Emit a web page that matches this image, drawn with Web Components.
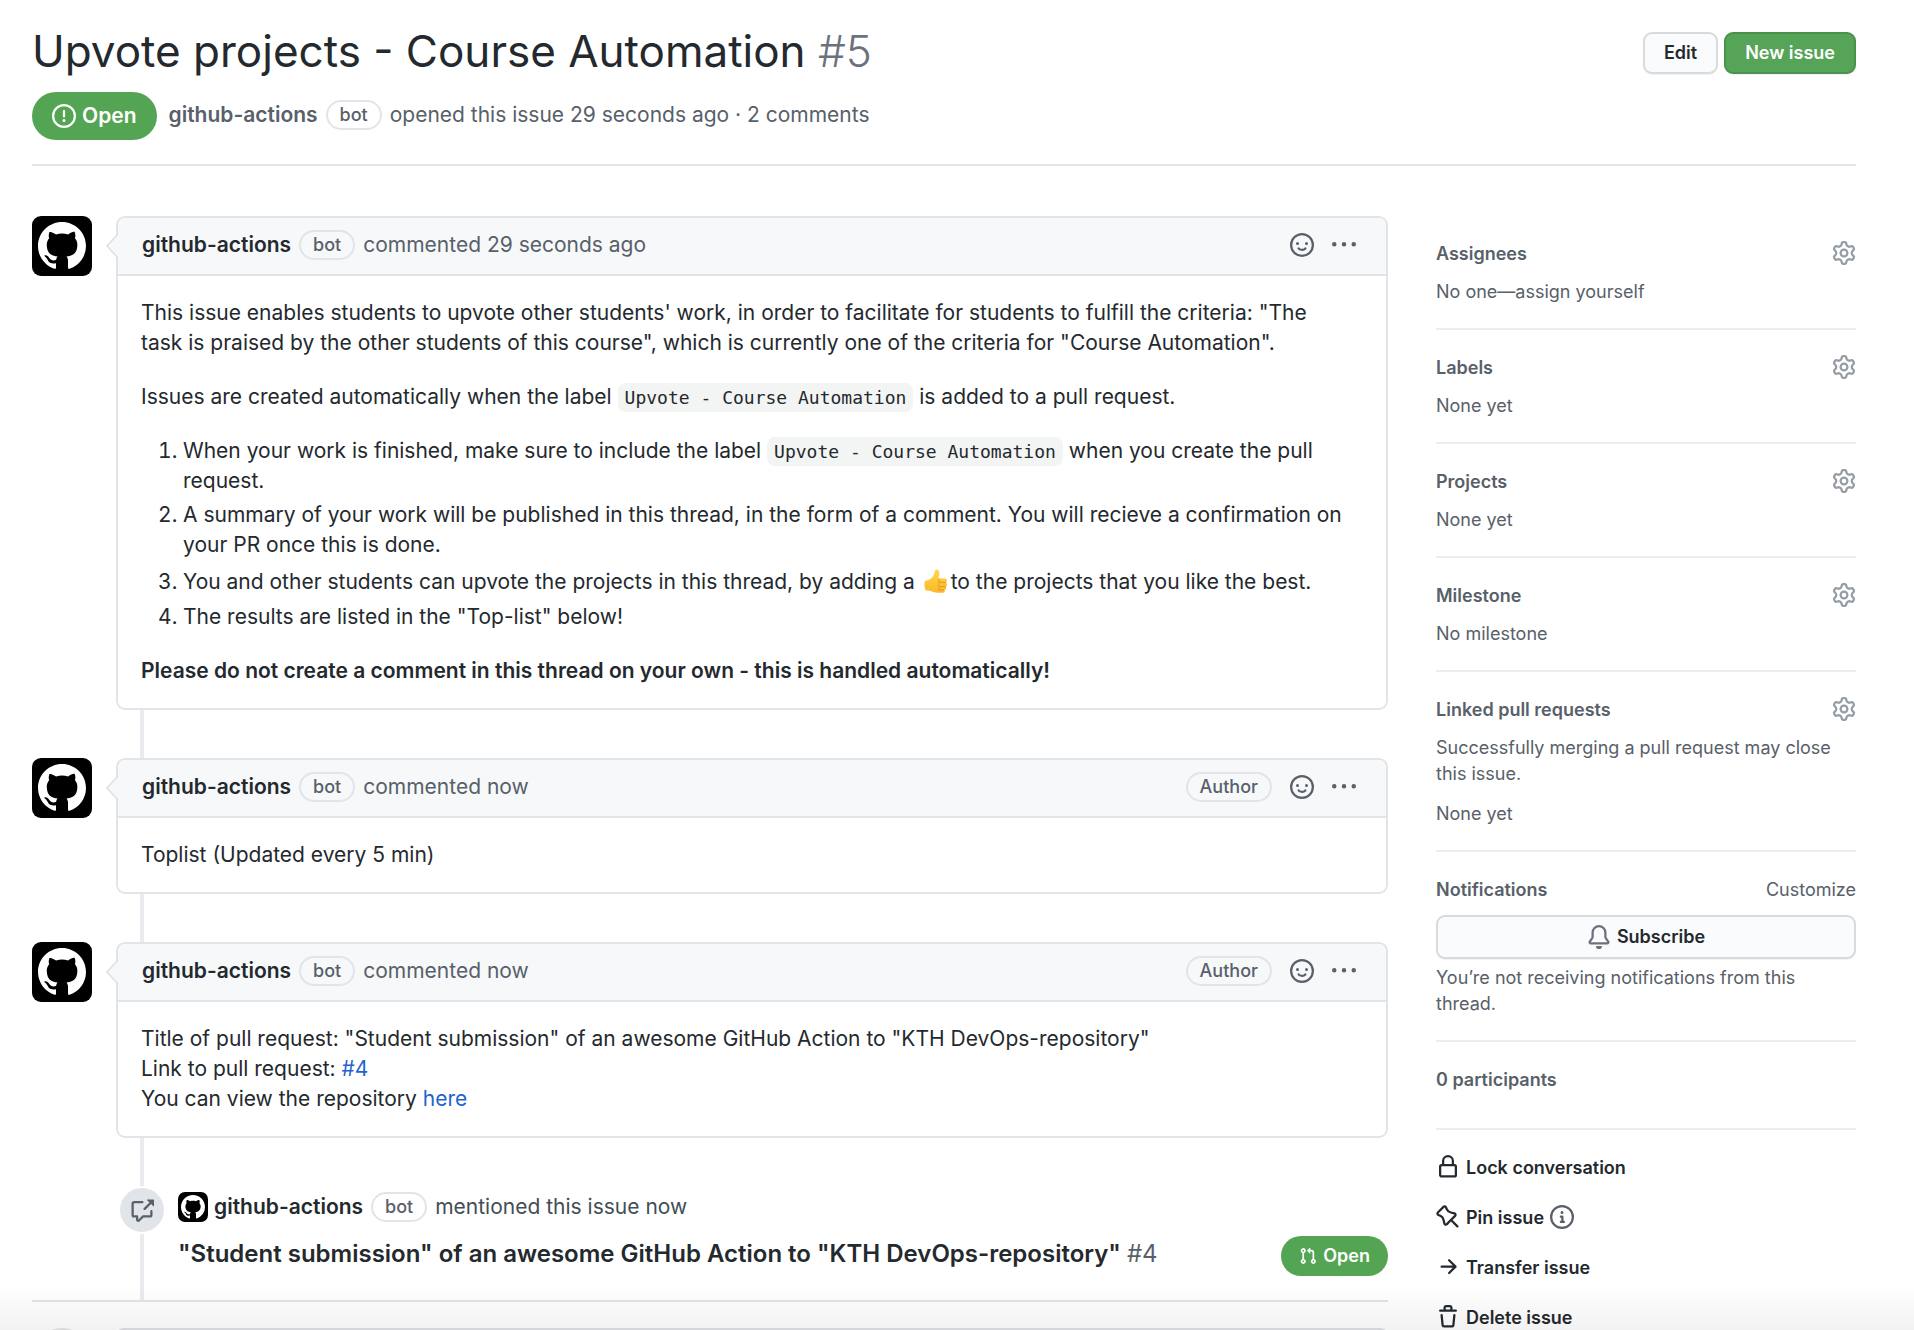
<!DOCTYPE html>
<html lang="en">
<head>
<meta charset="utf-8">
<title>Upvote projects - Course Automation · Issue #5</title>
<style>
  html, body { margin: 0; height: 100%; }
  body { background: #fff; overflow: hidden; }
</style>
</head>
<body>
<issue-page></issue-page>

<template id="t-issue-page">
  <style>
    :host {
      display: block; position: relative; height: 100%; overflow: hidden; box-sizing: border-box;
      padding: 24px 58px 0 32px;
      font: 21px/30px Inter, "Noto Sans", sans-serif; color: #24292e;
    }
    a { color: #1f63d1; text-decoration: none; }
    .top { display: flex; justify-content: space-between; align-items: flex-start; gap: 24px; }
    h1 { margin: 0; font-size: 44px; line-height: 54px; font-weight: 400; }
    h1 span { color: #6a737d; font-weight: 300; }
    .actions { display: flex; gap: 6px; padding-top: 8px; }
    .meta { display: flex; align-items: center; gap: 12px; margin-top: 14px; padding-bottom: 24px; border-bottom: 2px solid #e1e4e8; color: #586069; }
    .line { display: flex; align-items: center; gap: 8px; padding-bottom: 2px; }
    .line a { color: inherit; }
    .author { font-weight: 600; }
    .cols { display: flex; gap: 48px; margin-top: 50px; }
    main { flex: 1; min-width: 0; }
    aside { width: 420px; flex: none; }
    .timeline {
      display: flex; flex-direction: column; gap: 48px;
      background: linear-gradient(#eaebef, #eaebef) 108px 0 / 4px 100% no-repeat;
      border-bottom: 2px solid #e1e4e8;
    }
    p, ol { margin: 0 0 24px; }
    p:last-child { margin-bottom: 0; }
    p.note { margin-bottom: 14px; }
    ol { padding-left: 42px; }
    li + li { margin-top: 4px; }
    strong { font-weight: 600; }
    code { font: 18px/28px "DejaVu Sans Mono", monospace; background: #f3f4f4; border-radius: 8px; padding: 4px 7px; }
    .emoji { width: 24px; height: 24px; margin: 5px 3px; vertical-align: -9px; }
    .form { display: flex; gap: 24px; margin-top: 26px; }
    .form .face { width: 60px; height: 60px; border-radius: 50%; background: #e4e4e6; }
    .form .box { flex: 1; height: 60px; border-radius: 8px; background: #dfe0e6; }
    .fade { position: absolute; left: 0; right: 0; bottom: 0; height: 46px; background: linear-gradient(rgba(0,0,0,0), rgba(0,0,0,.05)); pointer-events: none; }
    .customize { color: inherit; }
    ul { list-style: none; margin: 0; padding: 25px 0 0; display: flex; flex-direction: column; gap: 24px; font-size: 18px; line-height: 26px; }
    ul li { margin: 0; }
  </style>
  <header>
    <div class="top">
      <h1>Upvote projects - Course Automation <span>#5</span></h1>
      <div class="actions"><ui-button>Edit</ui-button><ui-button kind="primary">New issue</ui-button></div>
    </div>
    <div class="meta">
      <state-badge icon="issue">Open</state-badge>
      <div class="line"><a class="author" href="#">github-actions</a><ui-pill>bot</ui-pill><span>opened this issue 29 seconds ago · 2 comments</span></div>
    </div>
  </header>
  <div class="cols">
    <main>
      <div class="timeline">
        <issue-comment when="29 seconds ago">
          <p>This issue enables students to upvote other students' work, in order to facilitate for students to fulfill the criteria: "The task is praised by the other students of this course", which is currently one of the criteria for "Course Automation".</p>
          <p>Issues are created automatically when the label <code>Upvote - Course Automation</code> is added to a pull request.</p>
          <ol>
            <li>When your work is finished, make sure to include the label <code>Upvote - Course Automation</code> when you create the pull request.</li>
            <li>A summary of your work will be published in this thread, in the form of a comment. You will recieve a confirmation on your PR once this is done.</li>
            <li>You and other students can upvote the projects in this thread, by adding a <svg class="emoji" viewBox="0 0 24 24" role="img" aria-label="thumbs up"><defs><linearGradient id="skin" x1="0" y1="0" x2="0" y2="1"><stop offset="0" stop-color="#ffd84a"/><stop offset="1" stop-color="#fbb829"/></linearGradient></defs><path d="M1 11.800C3.400 11.600 6 10.600 7.800 8.800c1.700-1.700 2.600-3.600 2.900-6C10.900 1 11.800.300 13 .600c1.800.400 2.500 2.100 2.300 4.400-.1 1.500-.5 3-1 4.600h6.600c1.200 0 2 .8 2 1.900 0 .9-.5 1.600-1.200 1.900.9.300 1.600 1.100 1.500 2.100-.1 1.100-.8 1.800-1.700 2 .6.400 1 1.100.8 2-.2.900-1 1.500-1.900 1.600.3.400.4.900.3 1.400-.3.900-1.100 1.200-2.200 1.200h-4.900c-2.600 0-4.500-.5-6.100-1.400-1.400-.7-3-.8-5.300-.6C.300 19.500 0 15 1 11.800z" fill="url(#skin)"/><path d="M16 13.400h5.600M15.600 17.500h5.600M15.400 21h4.200M15.800 9.800c-1.300.5-1.700 2.100-.7 3.400M15.200 13.700c-1 .8-1.100 2.700 0 3.600M15 17.800c-.8.900-.7 2.400.2 3" fill="none" stroke="#e08e1c" stroke-width=".8" stroke-linecap="round"/></svg>to the projects that you like the best.</li>
            <li>The results are listed in the "Top-list" below!</li>
          </ol>
          <p><strong>Please do not create a comment in this thread on your own - this is handled automatically!</strong></p>
        </issue-comment>
        <issue-comment when="now" role-label="Author">
          <p>Toplist (Updated every 5 min)</p>
        </issue-comment>
        <issue-comment when="now" role-label="Author">
          <p>Title of pull request: "Student submission" of an awesome GitHub Action to "KTH DevOps-repository"<br>Link to pull request: <a href="#">#4</a><br>You can view the repository <a href="#">here</a></p>
        </issue-comment>
        <cross-reference number="#4">"Student submission" of an awesome GitHub Action to "KTH DevOps-repository"</cross-reference>
      </div>
      <div class="form"><div class="face"></div><div class="box"></div></div>
    </main>
    <aside>
      <side-section heading="Assignees" gear>No one—assign yourself</side-section>
      <side-section heading="Labels" gear>None yet</side-section>
      <side-section heading="Projects" gear>None yet</side-section>
      <side-section heading="Milestone" gear>No milestone</side-section>
      <side-section heading="Linked pull requests" gear><p class="note">Successfully merging a pull request may close this issue.</p>None yet</side-section>
      <side-section heading="Notifications">
        <a class="customize" slot="aside" href="#">Customize</a>
        <ui-button block icon="bell">Subscribe</ui-button>
        You’re not receiving notifications from this thread.
      </side-section>
      <side-section heading="0 participants" empty></side-section>
      <ul>
        <li><side-action icon="lock">Lock conversation</side-action></li>
        <li><side-action icon="pin" info>Pin issue</side-action></li>
        <li><side-action icon="arrow">Transfer issue</side-action></li>
        <li><side-action icon="trash">Delete issue</side-action></li>
      </ul>
    </aside>
  </div>
  <div class="fade"></div>
</template>

<script>
const ICONS = {
  mark: "M8 0C3.58 0 0 3.58 0 8c0 3.54 2.29 6.53 5.47 7.59.4.07.55-.17.55-.38 0-.19-.01-.82-.01-1.49-2.01.37-2.53-.49-2.69-.94-.09-.23-.48-.94-.82-1.13-.28-.15-.68-.52-.01-.53.63-.01 1.08.58 1.23.82.72 1.21 1.87.87 2.33.66.07-.52.28-.87.51-1.07-1.78-.2-3.64-.89-3.64-3.95 0-.87.31-1.59.82-2.15-.08-.2-.36-1.02.08-2.12 0 0 .67-.21 2.2.82.64-.18 1.32-.27 2-.27.68 0 1.36.09 2 .27 1.53-1.04 2.2-.82 2.2-.82.44 1.1.16 1.92.08 2.12.51.56.82 1.27.82 2.15 0 3.07-1.87 3.75-3.65 3.95.29.25.54.73.54 1.48 0 1.07-.01 1.93-.01 2.2 0 .21.15.46.55.38A8.013 8.013 0 0016 8c0-4.42-3.58-8-8-8z",
  gear: "M7.429 1.525a6.593 6.593 0 011.142 0c.036.003.108.036.137.146l.289 1.105c.147.56.55.967.997 1.189.174.086.341.183.501.29.417.278.97.423 1.53.27l1.102-.303c.11-.03.175.016.195.046.219.31.41.641.573.989.014.031.022.11-.059.19l-.815.806c-.411.406-.562.957-.53 1.456a4.588 4.588 0 010 .582c-.032.499.119 1.05.53 1.456l.815.806c.08.08.073.159.059.19a6.494 6.494 0 01-.573.99c-.02.029-.086.074-.195.045l-1.103-.303c-.559-.153-1.112-.008-1.529.27-.16.107-.327.204-.5.29-.449.222-.851.628-.998 1.189l-.289 1.105c-.029.11-.101.143-.137.146a6.613 6.613 0 01-1.142 0c-.036-.003-.108-.037-.137-.146l-.289-1.105c-.147-.56-.55-.967-.997-1.189a4.502 4.502 0 01-.501-.29c-.417-.278-.97-.423-1.53-.27l-1.102.303c-.11.03-.175-.016-.195-.046a6.492 6.492 0 01-.573-.989c-.014-.031-.022-.11.059-.19l.815-.806c.411-.406.562-.957.53-1.456a4.587 4.587 0 010-.582c.032-.499-.119-1.05-.53-1.456l-.815-.806c-.08-.08-.073-.159-.059-.19a6.44 6.44 0 01.573-.99c.02-.029.086-.075.195-.045l1.103.303c.559.153 1.112.008 1.529-.27.16-.107.327-.204.5-.29.449-.222.851-.628.998-1.189l.289-1.105c.029-.11.101-.143.137-.146zM8 0c-.236 0-.47.01-.701.03-.743.065-1.29.615-1.458 1.261l-.29 1.106c-.017.066-.078.158-.211.224a5.994 5.994 0 00-.668.386c-.123.082-.233.09-.3.071L3.27 2.776c-.644-.177-1.392.02-1.82.63a7.977 7.977 0 00-.704 1.217c-.315.675-.111 1.422.363 1.891l.815.806c.05.048.098.147.088.294a6.084 6.084 0 000 .772c.01.147-.038.246-.088.294l-.815.806c-.474.469-.678 1.216-.363 1.891.2.428.436.835.704 1.218.428.609 1.176.806 1.82.63l1.103-.303c.066-.019.176-.011.299.071.213.143.436.272.668.386.133.066.194.158.212.224l.289 1.106c.169.646.715 1.196 1.458 1.26a8.094 8.094 0 001.402 0c.743-.064 1.29-.614 1.458-1.26l.29-1.106c.017-.066.078-.158.211-.224a5.98 5.98 0 00.668-.386c.123-.082.233-.09.3-.071l1.102.302c.644.177 1.392-.02 1.82-.63.268-.382.505-.789.704-1.217.315-.675.111-1.422-.364-1.891l-.814-.806c-.05-.048-.098-.147-.088-.294a6.1 6.1 0 000-.772c-.01-.147.039-.246.088-.294l.814-.806c.475-.469.679-1.216.364-1.891a7.992 7.992 0 00-.704-1.218c-.428-.609-1.176-.806-1.82-.63l-1.103.303c-.066.019-.176.011-.299-.071a5.991 5.991 0 00-.668-.386c-.133-.066-.194-.158-.212-.224L10.16 1.29C9.99.645 9.444.095 8.701.031A8.094 8.094 0 008 0zm1.5 8a1.5 1.5 0 11-3 0 1.5 1.5 0 013 0zM11 8a3 3 0 11-6 0 3 3 0 016 0z",
  issue: "M8 1.5a6.5 6.5 0 100 13 6.5 6.5 0 000-13zM0 8a8 8 0 1116 0A8 8 0 010 8zm9 3a1 1 0 11-2 0 1 1 0 012 0zm-.25-6.25a.75.75 0 00-1.5 0v3.5a.75.75 0 001.5 0v-3.5z",
  smiley: "M1.5 8a6.5 6.5 0 1113 0 6.5 6.5 0 01-13 0zM8 0a8 8 0 100 16A8 8 0 008 0zM5 8a1 1 0 100-2 1 1 0 000 2zm7-1a1 1 0 11-2 0 1 1 0 012 0zM5.32 9.636a.75.75 0 011.038.175l.007.009c.103.118.22.222.35.31.264.178.683.37 1.285.37.602 0 1.02-.192 1.285-.371.13-.088.247-.192.35-.31l.007-.008a.75.75 0 111.222.87l-.614-.431c.614.43.614.431.613.431v.001l-.001.002-.002.003-.005.007-.014.019a1.984 1.984 0 01-.184.213c-.16.166-.338.316-.53.445-.63.418-1.37.638-2.127.629-.946 0-1.652-.308-2.126-.63a3.32 3.32 0 01-.715-.657l-.014-.02-.005-.006-.002-.003v-.002h-.001l.613-.432-.614.43a.75.75 0 01.183-1.044h.001z",
  kebab: "M8 9a1.500 1.500 0 100-3 1.500 1.500 0 000 3zM1.500 9a1.500 1.500 0 100-3 1.500 1.500 0 000 3zm13 0a1.500 1.500 0 100-3 1.500 1.500 0 000 3z",
  bell: "M8 16a2 2 0 001.985-1.750c.017-.137-.097-.25-.235-.25h-3.500c-.138 0-.252.113-.235.25A2 2 0 008 16zM8 1.500A3.500 3.500 0 004.500 5v2.947c0 .346-.102.683-.294.97l-1.703 2.556a.018.018 0 00-.003.01l.001.006c0 .002.002.004.004.006a.017.017 0 00.006.004l.007.001h10.964l.007-.001a.016.016 0 00.006-.004.016.016 0 00.004-.006l.001-.007a.017.017 0 00-.003-.01l-1.703-2.554a1.750 1.750 0 01-.294-.97V5A3.500 3.500 0 008 1.500zM3 5a5 5 0 0110 0v2.947c0 .05.015.098.042.139l1.703 2.555A1.518 1.518 0 0113.482 13H2.518a1.518 1.518 0 01-1.263-2.360l1.703-2.554A.25.25 0 003 7.947V5z",
  lock: "M4 4v2h-.25A1.750 1.750 0 002 7.750v5.500c0 .966.784 1.750 1.750 1.750h8.500A1.750 1.750 0 0014 13.250v-5.500A1.750 1.750 0 0012.250 6H12V4a4 4 0 10-8 0zm6.500 2V4a2.500 2.500 0 10-5 0v2h5zM12 7.500h.25a.25.25 0 01.25.25v5.500a.25.25 0 01-.25.25h-8.500a.25.25 0 01-.25-.25v-5.500a.25.25 0 01.25-.25H12z",
  pull: "M7.177 3.073L9.573.677A.25.25 0 0110 .854v4.792a.25.25 0 01-.427.177L7.177 3.427a.25.25 0 010-.354zM3.750 2.500a.75.75 0 100 1.500.75.75 0 000-1.500zm-2.250.75a2.250 2.250 0 113 2.122v5.256a2.251 2.251 0 11-1.500 0V5.372A2.250 2.250 0 011.500 3.250zM11 2.500h-1V4h1a1 1 0 011 1v5.628a2.251 2.251 0 101.500 0V5A2.500 2.500 0 0011 2.500zm1 10.250a.75.75 0 111.500 0 .75.75 0 01-1.500 0zM3.750 12a.75.75 0 100 1.500.75.75 0 000-1.500z",
  trash: "M6.500 1.750a.25.25 0 01.25-.25h2.500a.25.25 0 01.25.25V3h-3V1.750zm4.500 0V3h2.250a.75.75 0 010 1.500H2.750a.75.75 0 010-1.500H5V1.750C5 .784 5.784 0 6.750 0h2.500C10.216 0 11 .784 11 1.750zM4.496 6.675a.75.75 0 10-1.492.15l.66 6.600A1.750 1.750 0 005.405 15h5.190c.9 0 1.652-.681 1.741-1.576l.66-6.600a.75.75 0 00-1.492-.149l-.66 6.600a.25.25 0 01-.249.225h-5.190a.25.25 0 01-.249-.225l-.66-6.600z",
  arrow: "M8.220 2.970a.75.75 0 011.060 0l4.250 4.250a.75.75 0 010 1.060l-4.250 4.250a.75.75 0 01-1.060-1.060l2.970-2.970H3.750a.75.75 0 010-1.500h7.440L8.220 4.030a.75.75 0 010-1.060z",
  info: "M8 1.500a6.500 6.500 0 100 13 6.500 6.500 0 000-13zM0 8a8 8 0 1116 0A8 8 0 010 8zm6.500-.25A.75.75 0 017.250 7h1a.75.75 0 01.75.75v2.750h.25a.75.75 0 010 1.500h-2a.75.75 0 010-1.500h.25v-2h-.25a.75.75 0 01-.75-.75zM8 6a1 1 0 100-2 1 1 0 000 2z",
  pin: "M4.456.734a1.750 1.750 0 012.826.504l.613 1.327a3.081 3.081 0 002.084 1.707l2.454.584c1.332.317 1.800 1.972.832 2.940L11.060 10l3.720 3.720a.75.75 0 11-1.061 1.060L10 11.060l-2.204 2.205c-.968.968-2.623.5-2.940-.832l-.584-2.454a3.081 3.081 0 00-1.707-2.084l-1.327-.613a1.750 1.750 0 01-.504-2.826L4.456.734zM5.920 1.866a.25.25 0 00-.404-.072L1.794 5.516a.25.25 0 00.072.404l1.328.613A4.582 4.582 0 015.730 9.630l.584 2.454a.25.25 0 00.42.12l5.470-5.470a.25.25 0 00-.12-.42L9.630 5.730a4.581 4.581 0 01-3.098-2.537L5.920 1.866z",
  cross: "M16 1.250v4.146a.25.25 0 01-.427.177L14.030 4.030l-3.750 3.750a.75.75 0 11-1.060-1.060l3.750-3.750-1.543-1.543A.25.25 0 0111.604 1h4.146a.25.25 0 01.25.25zM2.750 3.500a.25.25 0 00-.25.25v7.500c0 .138.112.25.25.25h2a.75.75 0 01.75.75v2.190l2.720-2.720a.75.75 0 01.53-.22h4.500a.25.25 0 00.25-.25v-2.500a.75.75 0 111.500 0v2.500A1.750 1.750 0 0113.250 13H9.060l-2.573 2.573A1.457 1.457 0 014 14.543V13H2.750A1.750 1.750 0 011 11.250v-7.500C1 2.784 1.784 2 2.750 2h5.500a.75.75 0 010 1.500h-5.500z"
};

/* Defines an element whose open shadow root is filled from render(element). */
const define = (name, render) => customElements.define(name, class extends HTMLElement {
  constructor() { super(); this.attachShadow({ mode: "open" }); }
  connectedCallback() { this.shadowRoot.innerHTML = render(this); }
});
const attr = (el, name) => el.getAttribute(name) || "";

define("ui-icon", el => `
  <style>
    :host { display: inline-flex; flex: none; width: var(--size, 24px); height: var(--size, 24px); }
    svg { width: 100%; height: 100%; fill: currentColor; fill-rule: evenodd; }
  </style>
  <svg viewBox="0 0 16 16" aria-hidden="true"><path d="${ICONS[attr(el, "name")]}"/></svg>`);

define("ui-avatar", () => `
  <style>
    :host { display: flex; flex: none; align-items: center; justify-content: center; width: 60px; height: 60px; border-radius: 9px; background: #000; color: #fff; --size: 48px; }
    :host([small]) { width: 30px; height: 30px; border-radius: 7px; --size: 24px; }
  </style>
  <ui-icon name="mark"></ui-icon>`);

define("ui-pill", () => `
  <style>
    :host { display: inline-block; box-sizing: border-box; height: 30px; padding: 0 12px; border: 2px solid #e1e4e8; border-radius: 15px; font-size: 18px; line-height: 26px; font-weight: 500; color: #586069; }
  </style><slot></slot>`);

define("ui-button", el => `
  <style>
    :host { display: inline-flex; }
    :host([block]) { display: flex; }
    button {
      flex: 1; display: flex; align-items: center; justify-content: center; gap: 6px; box-sizing: border-box;
      height: 42px; padding: 0 19px; border: 2px solid #d9dadc; border-radius: 9px; background: #fafbfc;
      font: 600 18px/26px Inter, "Noto Sans", sans-serif; color: #24292e; box-shadow: 0 1px 1px rgba(27,31,35,.06);
    }
    :host([block]) button { height: 44px; }
    :host([kind=primary]) button { background: #55a457; border-color: #4a924c; color: #fff; }
    ui-icon { color: #6a737d; }
  </style>
  <button type="button">${attr(el, "icon") ? `<ui-icon name="${attr(el, "icon")}"></ui-icon>` : ""}<slot></slot></button>`);

define("state-badge", el => `
  <style>
    :host { display: flex; flex: none; align-items: center; gap: 6px; box-sizing: border-box; height: 48px; padding: 0 20px; border-radius: 24px; background: #54a553; color: #fff; font-weight: 600; }
    :host([small]) { height: 40px; font-size: 18px; padding: 0 18px; --size: 18px; }
  </style>
  <ui-icon name="${attr(el, "icon")}"></ui-icon><slot></slot>`);

define("issue-comment", el => `
  <style>
    :host { display: flex; gap: 24px; align-items: flex-start; }
    article { position: relative; flex: 1; min-width: 0; border: 2px solid #e1e4e8; border-radius: 9px; background: #fff; }
    .caret { position: absolute; left: -12px; top: 16px; width: 12px; height: 24px; }
    header { display: flex; align-items: center; gap: 8px; box-sizing: border-box; height: 58px; padding: 0 30px 2px 24px; border-bottom: 2px solid #e1e4e8; border-radius: 7px 7px 0 0; background: #f6f8fa; color: #586069; }
    header a { color: #24292e; font-weight: 600; text-decoration: none; }
    .tools { display: flex; align-items: center; gap: 18px; margin-left: auto; }
    .tools button { display: flex; padding: 0; border: 0; background: none; color: #586069; }
    .body { padding: 22px 36px 22px 23px; }
  </style>
  <ui-avatar></ui-avatar>
  <article>
    <header>
      <a href="#">github-actions</a><ui-pill>bot</ui-pill><span>commented ${attr(el, "when")}</span>
      <div class="tools">
        ${attr(el, "role-label") ? `<ui-pill>${attr(el, "role-label")}</ui-pill>` : ""}
        <button type="button" aria-label="Add reaction"><ui-icon name="smiley"></ui-icon></button>
        <button type="button" aria-label="Show options"><ui-icon name="kebab"></ui-icon></button>
      </div>
    </header>
    <div class="body"><slot></slot></div>
    <svg class="caret" viewBox="0 0 12 24" aria-hidden="true"><path d="M12 0L1 12l11 12" fill="#f6f8fa" stroke="#dcdfe3" stroke-width="1.500"/></svg>
  </article>`);

define("cross-reference", el => `
  <style>
    :host { display: flex; align-items: flex-start; gap: 12px; padding: 0 0 24px 86px; }
    .badge { display: flex; flex: none; align-items: center; justify-content: center; width: 44px; height: 44px; border: 2px solid #fff; border-radius: 50%; background: #e1e4e8; color: #586069; }
    .text { flex: 1; min-width: 0; padding-top: 6px; }
    .line, .title { display: flex; align-items: center; gap: 8px; }
    .line ui-avatar { margin-right: -2px; }
    .line span { color: #444d56; }
    .line a { color: #24292e; font-weight: 600; text-decoration: none; }
    .title { justify-content: space-between; margin-top: 14px; }
    .title a { padding-bottom: 4px; font-size: 24px; line-height: 36px; font-weight: 600; color: #24292e; text-decoration: none; }
    .title a span { font-weight: 400; color: #586069; }
  </style>
  <div class="badge"><ui-icon name="cross"></ui-icon></div>
  <div class="text">
    <div class="line"><ui-avatar small></ui-avatar><a href="#">github-actions</a><ui-pill>bot</ui-pill><span>mentioned this issue now</span></div>
    <div class="title"><a href="#"><slot></slot> <span>${attr(el, "number")}</span></a><state-badge small icon="pull">Open</state-badge></div>
  </div>`);

define("side-section", el => `
  <style>
    :host { display: block; padding: 25px 0 23px; border-bottom: 2px solid #eaecef; font-size: 18px; line-height: 26px; color: #586069; }
    :host([empty]) { padding-bottom: 35px; }
    .head { display: flex; align-items: flex-start; justify-content: space-between; }
    h2 { margin: 0; font-size: 18px; line-height: 26px; font-weight: 600; }
    button { display: flex; padding: 0; border: 0; background: none; color: #959da5; }
    .content { margin-top: 12px; }
    :host([empty]) .content { display: none; }
    ::slotted(ui-button) { margin-bottom: 6px; }
  </style>
  <div class="head"><h2>${attr(el, "heading")}</h2>${el.hasAttribute("gear") ? `<button type="button" aria-label="Edit ${attr(el, "heading")}"><ui-icon name="gear"></ui-icon></button>` : `<slot name="aside"></slot>`}</div>
  <div class="content"><slot></slot></div>`);

define("side-action", el => `
  <style>
    :host { display: flex; align-items: flex-start; gap: 6px; color: #24292e; }
    button { display: flex; align-items: flex-start; gap: 6px; padding: 0; border: 0; background: none; color: inherit; font: 600 18px/26px Inter, "Noto Sans", sans-serif; }
    .info { color: #586069; }
  </style>
  <button type="button"><ui-icon name="${attr(el, "icon")}"></ui-icon><slot></slot></button>${el.hasAttribute("info") ? `<ui-icon class="info" name="info"></ui-icon>` : ""}`);

customElements.define("issue-page", class extends HTMLElement {
  connectedCallback() {
    this.attachShadow({ mode: "open" }).append(document.getElementById("t-issue-page").content.cloneNode(true));
  }
});
</script>
</body>
</html>
